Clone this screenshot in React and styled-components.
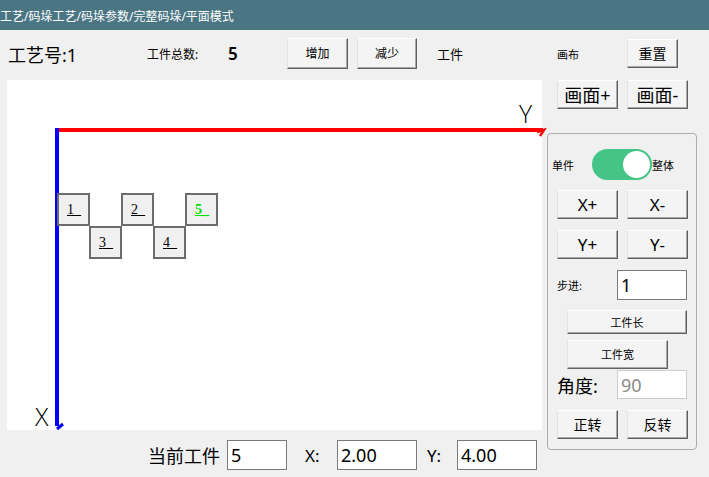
import React from 'react';
import styled, { createGlobalStyle } from 'styled-components';

const GlobalStyle = createGlobalStyle`
  html, body { margin: 0; padding: 0; background: #f0f0f0; }
  body {
    font-family: "Noto Sans", "Noto Sans CJK SC", sans-serif;
    color: #000;
  }
`;

const Page = styled.div`
  width: 709px;
  height: 477px;
  background: #f0f0f0;
  overflow: hidden;
`;

const TitleBar = styled.div`
  height: 30px;
  background: #4a7583;
  color: #fff;
  font-size: 12px;
  line-height: 34px;
  white-space: nowrap;
`;

const Header = styled.div`
  display: flex;
  align-items: center;
  height: 31px;
  margin-top: 8px;
  padding-left: 8px;
`;

const Cell = styled.div`
  width: ${(p) => p.$w}px;
  flex: none;
  font-size: ${(p) => p.$size || 12}px;
  font-weight: ${(p) => (p.$bold ? 600 : 400)};
  white-space: nowrap;
`;

const WinButton = styled.button`
  flex: none;
  width: ${(p) => p.$w || 61}px;
  height: ${(p) => p.$h || 29}px;
  margin-left: ${(p) => p.$ml || 0}px;
  padding: 0;
  background: #f4f4f4;
  border: 1px solid;
  border-color: #ffffff #5f5f5f #5f5f5f #e2e2e2;
  box-shadow: inset -1px -1px #a8a8a8;
  font-family: "Noto Sans", "Noto Sans CJK SC", sans-serif;
  font-size: ${(p) => p.$size || 12}px;
  color: #000;
  line-height: 1;
  cursor: pointer;
`;

const Main = styled.div`
  display: flex;
  margin-top: 11px;
  padding-left: 7px;
`;

const LeftCol = styled.div`
  width: 535px;
  flex: none;
`;

const Canvas = styled.div`
  position: relative;
  height: 350px;
  background: #fff;
`;

const AxisSvg = styled.svg`
  position: absolute;
  left: 0;
  top: 0;
  overflow: visible;
`;

const AxisLabel = styled.span`
  position: absolute;
  left: ${(p) => p.$x}px;
  top: ${(p) => p.$y}px;
  font-family: "Open Sans", sans-serif;
  font-weight: 300;
  font-size: 25px;
  line-height: 1;
  color: #000;
`;

const Piece = styled.div`
  position: absolute;
  left: ${(p) => p.$x}px;
  top: ${(p) => p.$y}px;
  width: 33px;
  height: 33px;
  box-sizing: border-box;
  background: #f0f0f0;
  border: 2px solid rgba(0, 0, 0, 0.55);
  display: flex;
  align-items: center;
  padding-left: 8px;
  font-family: "Liberation Serif", serif;
  font-size: 14px;
  font-weight: ${(p) => (p.$active ? 700 : 400)};
  color: ${(p) => (p.$active ? '#00e000' : '#000')};
  text-decoration: underline;
`;

const BottomRow = styled.div`
  display: flex;
  align-items: center;
  height: 30px;
  margin-top: 10px;
  padding-left: 141px;
`;

const Field = styled.input`
  flex: none;
  width: ${(p) => p.$w}px;
  height: ${(p) => p.$h || 30}px;
  box-sizing: border-box;
  padding: 0 3px;
  border: 1px solid ${(p) => (p.disabled ? '#cccccc' : '#7a7a7a')};
  background: #fff;
  font-family: "Noto Sans", sans-serif;
  font-size: 18px;
  color: ${(p) => (p.disabled ? '#8a8a8a' : '#000')};
  outline: none;
`;

const RightCol = styled.div`
  width: 150px;
  flex: none;
  margin-left: 5px;
`;

const ZoomRow = styled.div`
  display: flex;
  padding-left: 10px;
  gap: 9px;
`;

const GroupBox = styled.div`
  margin-top: 24px;
  height: 317px;
  box-sizing: border-box;
  border: 1px solid #adadad;
  border-radius: 4px;
  padding-top: 15px;
`;

const Row = styled.div`
  display: flex;
  align-items: center;
  margin-top: ${(p) => p.$top || 0}px;
  padding-left: ${(p) => p.$left || 9}px;
  gap: ${(p) => p.$gap || 0}px;
`;

const Label = styled.span`
  width: ${(p) => p.$w}px;
  flex: none;
  font-size: ${(p) => p.$size || 11}px;
  white-space: nowrap;
`;

const Toggle = styled.div`
  position: relative;
  width: 60px;
  height: 31px;
  flex: none;
  border-radius: 16px;
  background: #44c486;
`;

const Knob = styled.div`
  position: absolute;
  right: 2px;
  top: 2px;
  width: 27px;
  height: 27px;
  border-radius: 50%;
  background: #fff;
`;

const pieces = [
  { n: 1, x: 50, y: 113 },
  { n: 2, x: 114, y: 113 },
  { n: 5, x: 178, y: 113, active: true },
  { n: 3, x: 82, y: 146 },
  { n: 4, x: 146, y: 146 },
];

export default function App() {
  return (
    <Page>
      <GlobalStyle />
      <TitleBar>工艺/码垛工艺/码垛参数/完整码垛/平面模式</TitleBar>
      <Header>
        <Cell $w={139} $size={18}>工艺号:1</Cell>
        <Cell $w={81}>工件总数:</Cell>
        <Cell $w={59} $size={17} $bold>5</Cell>
        <WinButton $w={61} $h={31}>增加</WinButton>
        <WinButton $w={60} $h={31} $ml={9}>减少</WinButton>
        <Cell $w={120} $size={13} style={{ marginLeft: 20 }}>工件</Cell>
        <Cell $w={70} $size={11}>画布</Cell>
        <WinButton $w={51} $h={29} $size={14}>重置</WinButton>
      </Header>
      <Main>
        <LeftCol>
          <Canvas>
            <AxisSvg width="535" height="350">
              <line x1="48" y1="50" x2="536" y2="50" stroke="#ff0000" strokeWidth="4" />
              <path d="M530 52 L537 50 L533 56" fill="none" stroke="#ff0000" strokeWidth="2.5" />
              <line x1="50" y1="48" x2="50" y2="346" stroke="#0000ff" strokeWidth="4" />
              <path d="M50 349 L56 344" fill="none" stroke="#0000ff" strokeWidth="3" />
            </AxisSvg>
            <AxisLabel $x={512} $y={21}>Y</AxisLabel>
            <AxisLabel $x={28} $y={324}>X</AxisLabel>
            {pieces.map((p) => (
              <Piece key={p.n} $x={p.x} $y={p.y} $active={p.active}>
                {p.n}_
              </Piece>
            ))}
          </Canvas>
          <BottomRow>
            <Label $w={79} $size={18}>当前工件</Label>
            <Field $w={60} defaultValue="5" />
            <Label $w={32} $size={17} style={{ marginLeft: 18 }}>X:</Label>
            <Field $w={80} defaultValue="2.00" />
            <Label $w={30} $size={17} style={{ marginLeft: 10 }}>Y:</Label>
            <Field $w={80} defaultValue="4.00" />
          </BottomRow>
        </LeftCol>
        <RightCol>
          <ZoomRow>
            <WinButton $size={18}>画面+</WinButton>
            <WinButton $size={18}>画面-</WinButton>
          </ZoomRow>
          <GroupBox>
            <Row $left={4}>
              <Label $w={40}>单件</Label>
              <Toggle>
                <Knob />
              </Toggle>
              <Label $w={30}>整体</Label>
            </Row>
            <Row $top={10} $gap={9}>
              <WinButton $size={17}>X+</WinButton>
              <WinButton $size={17}>X-</WinButton>
            </Row>
            <Row $top={11} $gap={9}>
              <WinButton $size={17}>Y+</WinButton>
              <WinButton $size={17}>Y-</WinButton>
            </Row>
            <Row $top={11}>
              <Label $w={60}>步进:</Label>
              <Field $w={70} defaultValue="1" />
            </Row>
            <Row $top={10} $left={19}>
              <WinButton $w={120} $h={24} $size={11}>工件长</WinButton>
            </Row>
            <Row $top={6} $left={19}>
              <WinButton $w={101} $h={29} $size={11}>工件宽</WinButton>
            </Row>
            <Row $top={1}>
              <Label $w={60} $size={18}>角度:</Label>
              <Field $w={70} $h={29} defaultValue="90" disabled />
            </Row>
            <Row $top={11} $gap={9}>
              <WinButton $size={14}>正转</WinButton>
              <WinButton $size={14}>反转</WinButton>
            </Row>
          </GroupBox>
        </RightCol>
      </Main>
    </Page>
  );
}
